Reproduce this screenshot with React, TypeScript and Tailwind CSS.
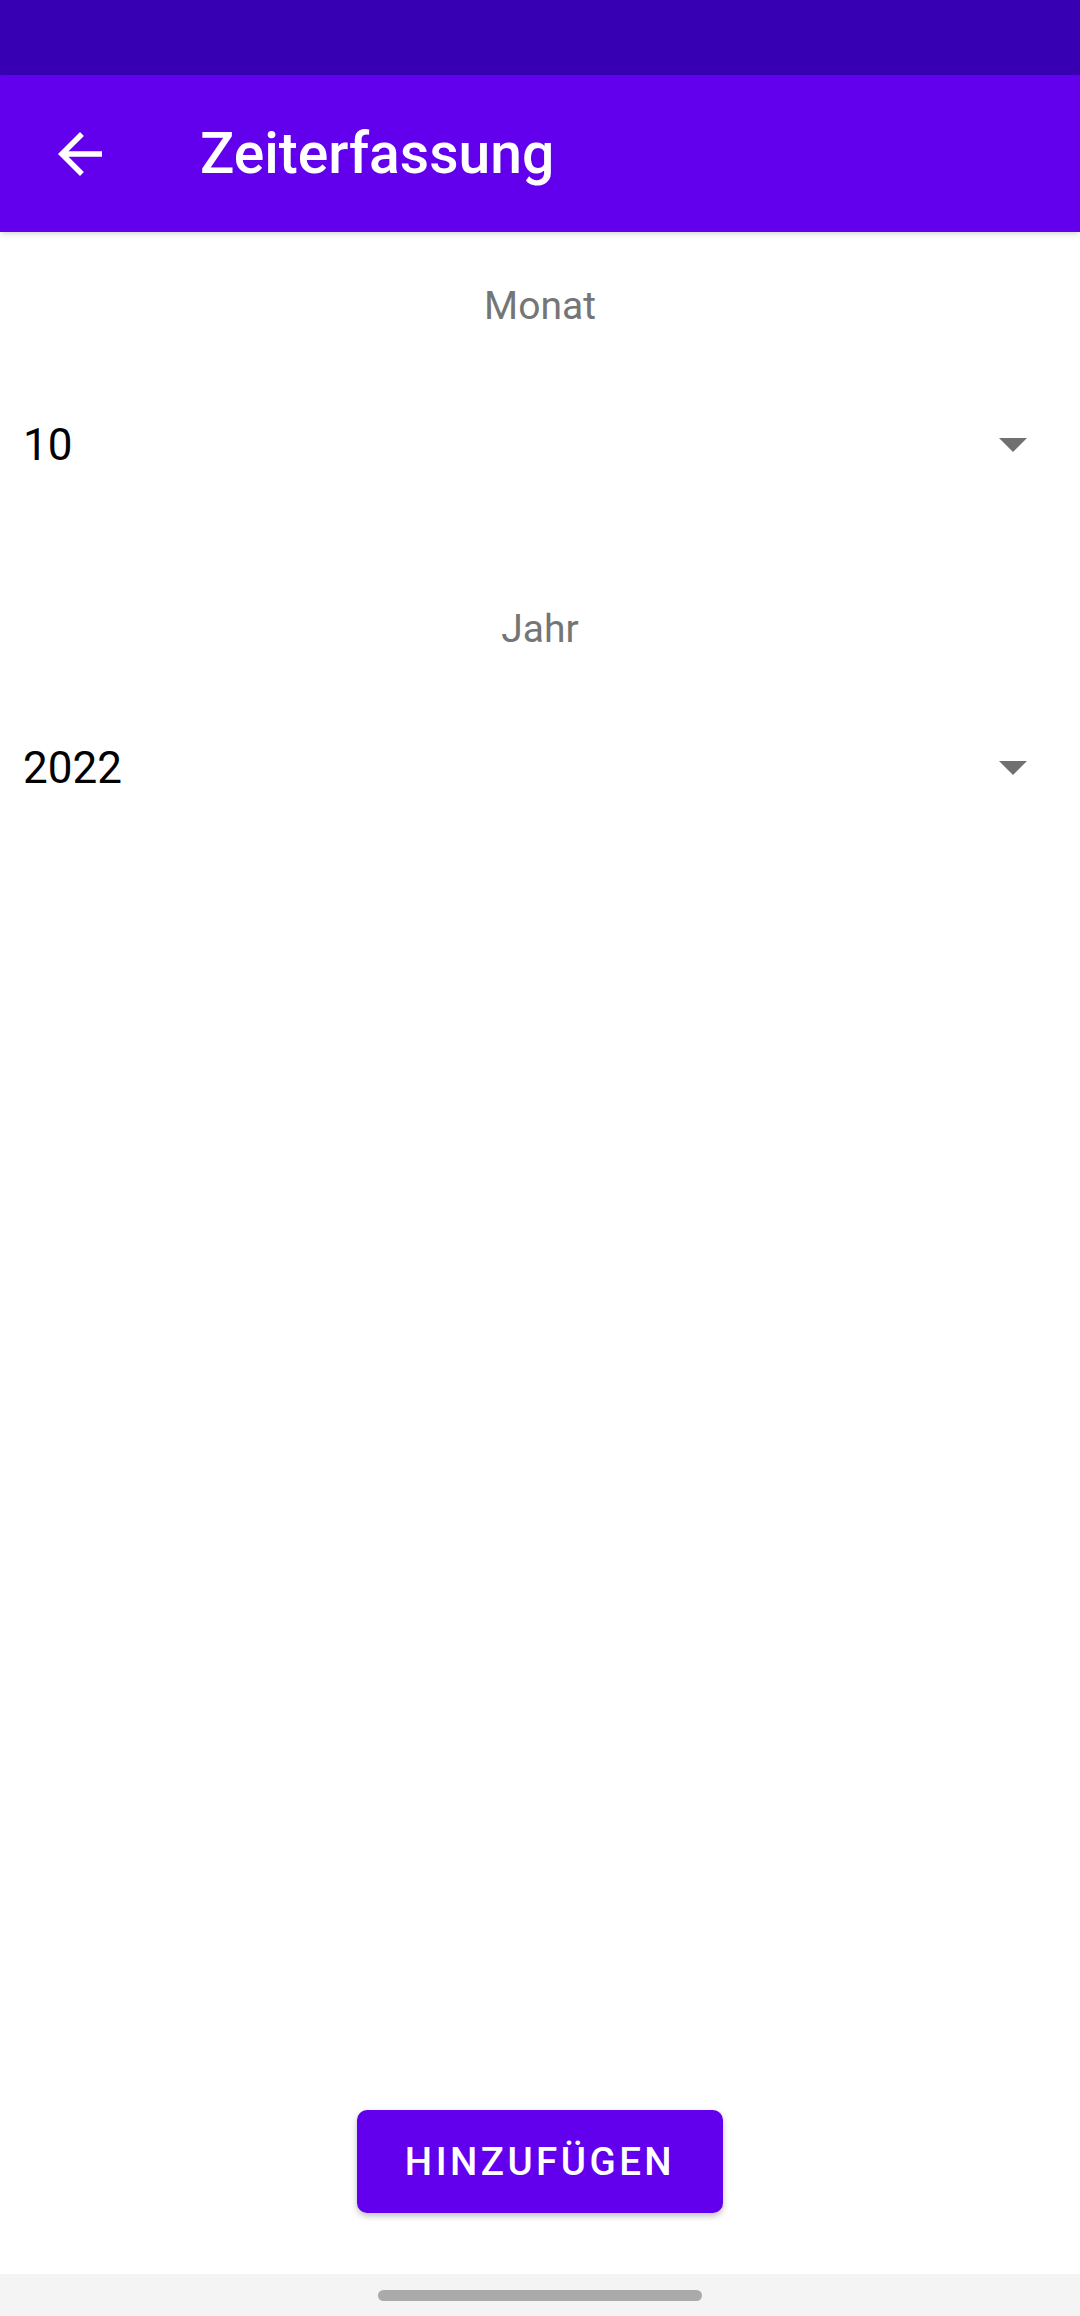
import React from "react";

function Caret() {
  return (
    <svg width="28" height="14" viewBox="0 0 28 14" className="mr-[53px]">
      <polygon points="0,0 28,0 14,14" fill="#707070" />
    </svg>
  );
}

function SpinnerField({ label, value }: { label: string; value: string }) {
  return (
    <div className="flex flex-col">
      {/* label above the spinner */}
      <div className="h-[148px] flex items-center justify-center text-[39px] text-[#757575]">
        {label}
      </div>
      <div className="h-[130px] flex items-center justify-between pl-[23px]">
        <span className="text-[44px] text-black">{value}</span>
        <Caret />
      </div>
    </div>
  );
}

export default function App() {
  return (
    <div
      className="h-screen w-full flex flex-col bg-white"
      style={{ fontFamily: "Roboto, 'Noto Sans', sans-serif" }}
    >
      {/* status bar */}
      <div className="h-[75px] bg-[#3700B3] shrink-0" />

      {/* toolbar */}
      <div className="h-[157px] bg-[#6200EE] flex items-center pl-[47px] shadow-md relative z-10 shrink-0">
        <svg width="66" height="66" viewBox="0 0 24 24" fill="white">
          <path d="M20 11H7.83l5.59-5.59L12 4l-8 8 8 8 1.41-1.41L7.83 13H20v-2z" />
        </svg>
        <h1 className="ml-[87px] text-[57px] font-medium text-white leading-none">Zeiterfassung</h1>
      </div>

      <main className="flex-1 flex flex-col">
        <SpinnerField label="Monat" value="10" />
        <div className="h-[45px]" />
        <SpinnerField label="Jahr" value="2022" />

        <div className="flex-1" />

        <div className="flex justify-center pb-[61px]">
          <button className="w-[366px] h-[103px] rounded-[10px] bg-[#6200EE] text-white text-[38.5px] font-medium tracking-[0.09em] shadow-[0_3px_6px_rgba(0,0,0,0.25)]">
            HINZUFÜGEN
          </button>
        </div>
      </main>

      {/* gesture nav bar */}
      <div className="h-[42px] bg-[#f4f4f4] flex justify-center pt-[16px] shrink-0">
        <div className="w-[324px] h-[11px] rounded-full bg-[#aaaaaa]" />
      </div>
    </div>
  );
}
